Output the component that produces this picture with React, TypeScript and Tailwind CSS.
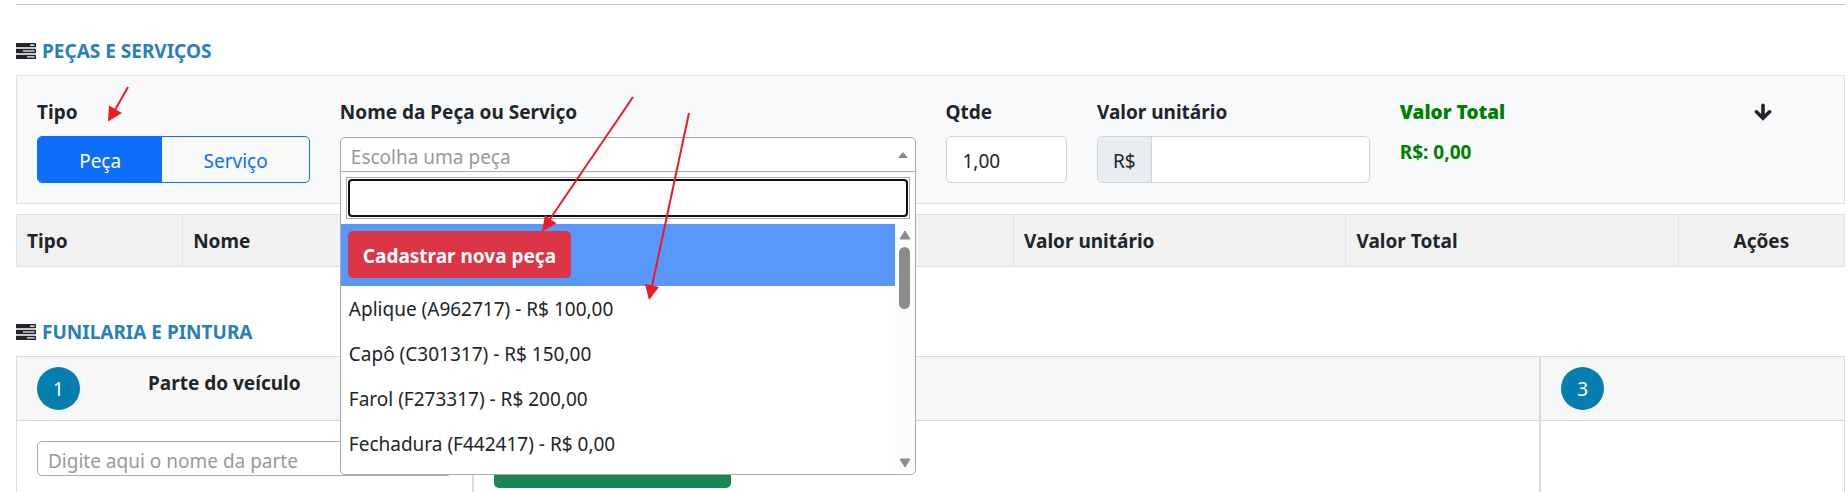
import { useState } from "react";

const parts = [
    "Aplique (A962717) - R$ 100,00",
    "Capô (C301317) - R$ 150,00",
    "Farol (F273317) - R$ 200,00",
    "Fechadura (F442417) - R$ 0,00",
];

const columns = [
    { label: "Tipo", className: "w-1/11 text-left" },
    { label: "Nome", className: "w-5/11 text-left" },
    { label: "Valor unitário", className: "w-2/11 text-left" },
    { label: "Valor Total", className: "w-2/11 text-left" },
    { label: "Ações", className: "w-1/11 text-center" },
];

const TasksIcon = () => (
    <svg viewBox="0 0 20 16" className="h-4 w-5" aria-hidden="true">
        <rect width="20" height="4.300" rx="0.5" fill="#212529" />
        <rect y="5.700" width="20" height="4.600" rx="0.5" fill="#212529" />
        <rect y="11.700" width="20" height="4.300" rx="0.5" fill="#212529" />
        <rect x="14" y="1.500" width="4.600" height="1.300" fill="#fff" />
        <rect x="7" y="7.300" width="11.600" height="1.400" fill="#ddd" />
        <rect x="11" y="13.200" width="7.600" height="1.400" fill="#ddd" />
    </svg>
);

const SectionTitle = ({ children }: { children: string }) => (
    <h2 className="flex h-[30px] w-fit items-center gap-[6px] font-bold text-[#2980b9]">
        <TasksIcon />
        {children}
    </h2>
);

const TypeToggle = () => {
    const [type, setType] = useState("Peça");

    return (
        <fieldset>
            <legend className="mb-[9px] font-bold">Tipo</legend>
            <div className="flex h-[47px] overflow-hidden rounded-[5px] border border-[#0d6efd]">
                {["Peça", "Serviço"].map((name) => (
                    <label
                        key={name}
                        className="relative flex grow cursor-pointer items-center justify-center pt-[2px] text-[#0d6efd] has-checked:bg-[#0d6efd] has-checked:text-white"
                    >
                        <input
                            type="radio"
                            name="tipo"
                            className="sr-only"
                            checked={type === name}
                            onChange={() => setType(name)}
                        />
                        {name}
                    </label>
                ))}
            </div>
        </fieldset>
    );
};

const PartSelect = () => (
    <div>
        <label htmlFor="peca" className="mb-[10px] block font-bold">
            Nome da Peça ou Serviço
        </label>
        <div className="relative">
            <select
                id="peca"
                className="block h-[35px] w-full appearance-none rounded-t-[5px] border border-[#aaa] bg-white px-[10px] pt-1 text-[#999]"
            >
                <option>Escolha uma peça</option>
            </select>
            <svg
                viewBox="0 0 10 6"
                className="pointer-events-none absolute top-[15px] right-2 h-[6px] w-[10px]"
                aria-hidden="true"
            >
                <path d="M0 6 5 0l5 6z" fill="#888" />
            </svg>
            <div className="absolute inset-x-0 top-[34px] z-10 rounded-b-[5px] border border-[#aaa] bg-white">
                <div className="p-[5px]">
                    <div className="border border-[#aaa] p-px">
                        <input
                            type="text"
                            aria-label="Buscar peça"
                            className="block h-[38px] w-full rounded-[4px] border-2 border-[#101010] px-1 outline-none"
                        />
                    </div>
                </div>
                <div className="flex h-[250px] overflow-hidden">
                    <ul className="grow">
                        <li className="h-[62px] bg-[#5897fb] p-[7px]">
                            <button
                                type="button"
                                className="block h-[47px] rounded-[5px] bg-[#dc3545] px-[15px] pt-[2px] font-bold text-white"
                            >
                                Cadastrar nova peça
                            </button>
                        </li>
                        {parts.map((part) => (
                            <li
                                key={part}
                                className="flex h-[45px] items-center px-2"
                            >
                                {part}
                            </li>
                        ))}
                    </ul>
                    <div className="flex w-5 flex-col items-center rounded-br-[5px] bg-[#fcfcfc] py-[6px]">
                        <svg viewBox="0 0 12 10" className="h-[10px] w-3">
                            <path
                                d="M6 1 11 9H1z"
                                fill="#8b8b8b"
                                stroke="#8b8b8b"
                                strokeLinejoin="round"
                            />
                        </svg>
                        <div className="mt-[7px] h-[62px] w-[11px] rounded-full bg-[#8b8b8b]" />
                        <svg
                            viewBox="0 0 12 10"
                            className="mt-auto h-[10px] w-3"
                        >
                            <path
                                d="M6 9 11 1H1z"
                                fill="#8b8b8b"
                                stroke="#8b8b8b"
                                strokeLinejoin="round"
                            />
                        </svg>
                    </div>
                </div>
            </div>
        </div>
    </div>
);

const PartsForm = () => (
    <div className="grid h-[129px] grid-cols-12 border border-[#dee2e6] bg-[#f8f9fa] px-[5px] pt-[21px] *:px-[15px]">
        <div className="col-span-2">
            <TypeToggle />
        </div>
        <div className="col-span-4">
            <PartSelect />
        </div>
        <div>
            <label htmlFor="qtde" className="mb-[9px] block font-bold">
                Qtde
            </label>
            <input
                id="qtde"
                type="text"
                defaultValue="1,00"
                className="h-[47px] w-full rounded-[5px] border border-[#ced4da] bg-white px-4 pt-[2px]"
            />
        </div>
        <div className="col-span-2">
            <label htmlFor="valor" className="mb-[9px] block font-bold">
                Valor unitário
            </label>
            <div className="flex h-[47px] overflow-hidden rounded-[5px] border border-[#ced4da] bg-white">
                <span className="flex items-center border-r border-[#ced4da] bg-[#e9ecef] px-[15px] pt-[2px]">
                    R$
                </span>
                <input
                    id="valor"
                    type="text"
                    className="w-full min-w-0 grow px-4 outline-none"
                />
            </div>
        </div>
        <div className="col-span-2 text-[#008000]">
            <div className="mb-[10px] font-black">Valor Total</div>
            <div className="font-bold">R$: 0,00</div>
        </div>
        <div className="flex justify-center">
            <button type="button" aria-label="Adicionar" className="h-[30px]">
                <svg
                    viewBox="0 0 18 18"
                    className="size-[18px]"
                    fill="none"
                    stroke="#212529"
                    strokeWidth="3.6"
                    strokeLinecap="round"
                >
                    <path d="M9 2.200V14" />
                    <path d="M2.400 8.800 9 15.200l6.600-6.400" strokeLinejoin="miter" />
                </svg>
            </button>
        </div>
    </div>
);

const PartsTable = () => (
    <table className="mt-[10px] w-full table-fixed border-collapse bg-[#f1f1f1]">
        <thead>
            <tr className="h-[52px]">
                {columns.map((column) => (
                    <th
                        key={column.label}
                        className={`border border-[#dee2e6] px-[10px] ${column.className}`}
                    >
                        {column.label}
                    </th>
                ))}
            </tr>
        </thead>
    </table>
);

const Step = ({ number }: { number: number }) => (
    <span className="flex size-[43px] items-center justify-center rounded-full bg-[#067eb0] text-white">
        {number}
    </span>
);

const PaintSteps = () => (
    <div className="grid grid-cols-12 *:border *:border-[#dcdcdc]">
        <div className="col-span-3">
            <div className="flex h-16 border-b border-[#d8d8d8] bg-[#f7f7f7] px-5 pt-[10px]">
                <Step number={1} />
                <label htmlFor="parte" className="ml-[68px] pt-px font-bold">
                    Parte do veículo
                </label>
            </div>
            <div className="px-5 py-5">
                <input
                    id="parte"
                    type="text"
                    placeholder="Digite aqui o nome da parte"
                    className="h-[35px] w-full rounded-[5px] border border-[#aaa] px-[10px] pt-1 placeholder:text-[#999]"
                />
            </div>
        </div>
        <div className="col-span-7">
            <div className="h-16 border-b border-[#d8d8d8] bg-[#f7f7f7]" />
            <div className="px-5 py-5">
                <button
                    type="button"
                    aria-label="Adicionar"
                    className="block h-[47px] w-[237px] rounded-[5px] bg-[#198754]"
                />
            </div>
        </div>
        <div className="col-span-2">
            <div className="flex h-16 border-b border-[#d8d8d8] bg-[#f7f7f7] px-5 pt-[10px]">
                <Step number={3} />
            </div>
        </div>
    </div>
);

// Red arrows pointing at the type toggle and the part options
const Arrows = () => (
    <svg
        className="pointer-events-none absolute top-0 left-0 z-20 h-[320px] w-[720px]"
        viewBox="0 0 720 320"
        fill="#ed1c24"
        stroke="#ed1c24"
        aria-hidden="true"
    >
        <path d="M128 87 115 110M633 97 550 219M689 113 652 286" strokeWidth="2" />
        <path
            d="M109 105.500 122 113 108 121.500zM545 215 556.500 223.500 542 231.500zM645 284 659 287 649 300z"
            stroke="none"
        />
    </svg>
);

const App = () => (
    <main className="relative h-screen overflow-hidden bg-white pr-[3px] pl-4 font-['Noto_Sans','Open_Sans',sans-serif] text-[19px] leading-[30px] text-[#212529]">
        <hr className="mt-1 mb-[31px] border-[#c8c8c8]" />
        <section>
            <SectionTitle>PEÇAS E SERVIÇOS</SectionTitle>
            <div className="pt-[9px]">
                <PartsForm />
                <PartsTable />
            </div>
        </section>
        <section className="pt-[50px]">
            <SectionTitle>FUNILARIA E PINTURA</SectionTitle>
            <div className="pt-[9px]">
                <PaintSteps />
            </div>
        </section>
        <Arrows />
    </main>
);

export default App;
